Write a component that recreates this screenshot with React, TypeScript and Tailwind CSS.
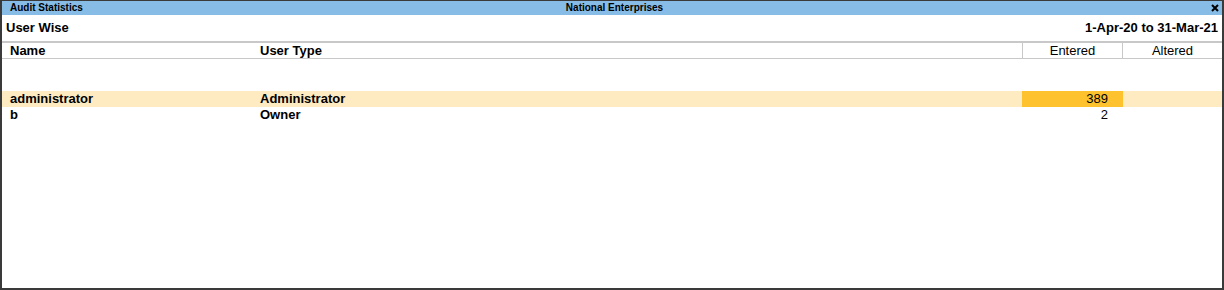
const rows = [
  { name: 'administrator', type: 'Administrator', entered: '389', altered: '', active: true },
  { name: 'b', type: 'Owner', entered: '2', altered: '', active: false },
];

export default function App() {
  return (
    <div className="w-[1224px] h-[290px] flex flex-col bg-white border-t border-l-2 border-r-2 border-b-2 border-[#3a3a3a] font-['Liberation_Sans',Arial,sans-serif] text-black">
      {/* title bar */}
      <div className="h-[14px] flex items-center bg-[#86bce6] text-[10px] font-bold leading-none">
        <div className="flex-1 pl-2">Audit Statistics</div>
        <div className="flex-1 text-center">National Enterprises</div>
        <div className="flex-1 flex justify-end pr-[3px]">
          <svg width="8" height="8" viewBox="0 0 8 8">
            <path d="M1 1L7 7M7 1L1 7" stroke="#000" strokeWidth="2" />
          </svg>
        </div>
      </div>

      <div className="h-[26px] flex items-center justify-between px-[4px] text-[13px] font-bold">
        <span>User Wise</span>
        <span>1-Apr-20 to 31-Mar-21</span>
      </div>

      {/* column header */}
      <div className="h-[18px] flex border-t-2 border-b border-[#c8c8c8] text-[13px]">
        <div className="w-[258px] pl-2 font-bold leading-[16px]">Name</div>
        <div className="flex-1 font-bold leading-[16px]">User Type</div>
        <div className="w-[100px] border-l border-[#c8c8c8] text-center leading-[16px]">Entered</div>
        <div className="w-[100px] border-l border-[#c8c8c8] text-center leading-[16px]">Altered</div>
      </div>

      <div className="h-[32px]" />

      {rows.map((r) => (
        <div key={r.name} className={`h-[16px] flex text-[13px] leading-[16px] ${r.active ? 'bg-[#feebc1]' : ''}`}>
          <div className="w-[258px] pl-2 font-bold">{r.name}</div>
          <div className="flex-1 font-bold">{r.type}</div>
          <div className={`w-[101px] pr-[15px] text-right ${r.active ? 'bg-[#fec22f]' : ''}`}>{r.entered}</div>
          <div className="w-[99px] pr-[15px] text-right">{r.altered}</div>
        </div>
      ))}
    </div>
  );
}
